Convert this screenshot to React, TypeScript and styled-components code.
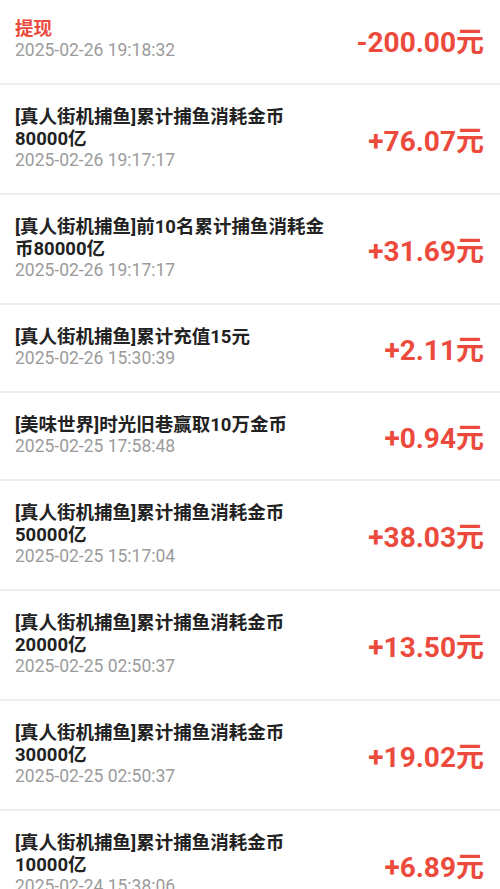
import React from "react";
import styled, { createGlobalStyle } from "styled-components";

const GlobalStyle = createGlobalStyle`
  html, body {
    margin: 0;
    padding: 0;
    background: #ffffff;
  }
  body {
    font-family: Roboto, "Noto Sans CJK SC", "Noto Sans", sans-serif;
    -webkit-font-smoothing: antialiased;
  }
`;

const Page = styled.div`
  width: 500px;
  height: 889px;
  overflow: hidden;
  background: #ffffff;
`;

const List = styled.ul`
  list-style: none;
  margin: 0;
  padding: 0;
`;

const Row = styled.li`
  display: flex;
  align-items: center;
  justify-content: space-between;
  padding: 21px 16px 22px 15px;
  border-bottom: 2px solid #eeeeee;

  &:first-child {
    padding-top: 18px;
  }
`;

const Info = styled.div`
  display: flex;
  flex-direction: column;
  min-width: 0;
`;

const Title = styled.div<{ $red?: boolean }>`
  font-family: Roboto, "Noto Sans CJK SC", sans-serif;
  font-size: 18.5px;
  font-weight: 700;
  line-height: 22px;
  color: ${(p) => (p.$red ? "#ec4a3d" : "#222222")};
  white-space: pre-line;
`;

const Time = styled.div`
  font-family: Roboto, "Noto Sans", sans-serif;
  font-size: 17.5px;
  line-height: 21px;
  color: #9b9b9b;
`;

const Amount = styled.div`
  font-family: Roboto, "Noto Sans CJK SC", sans-serif;
  font-size: 28px;
  font-weight: 700;
  color: #ec4a3d;
  white-space: nowrap;
`;

type Record = {
  title: string;
  time: string;
  amount: string;
  red?: boolean;
};

const records: Record[] = [
  { title: "提现", time: "2025-02-26 19:18:32", amount: "-200.00元", red: true },
  { title: "[真人街机捕鱼]累计捕鱼消耗金币\n80000亿", time: "2025-02-26 19:17:17", amount: "+76.07元" },
  { title: "[真人街机捕鱼]前10名累计捕鱼消耗金\n币80000亿", time: "2025-02-26 19:17:17", amount: "+31.69元" },
  { title: "[真人街机捕鱼]累计充值15元", time: "2025-02-26 15:30:39", amount: "+2.11元" },
  { title: "[美味世界]时光旧巷赢取10万金币", time: "2025-02-25 17:58:48", amount: "+0.94元" },
  { title: "[真人街机捕鱼]累计捕鱼消耗金币\n50000亿", time: "2025-02-25 15:17:04", amount: "+38.03元" },
  { title: "[真人街机捕鱼]累计捕鱼消耗金币\n20000亿", time: "2025-02-25 02:50:37", amount: "+13.50元" },
  { title: "[真人街机捕鱼]累计捕鱼消耗金币\n30000亿", time: "2025-02-25 02:50:37", amount: "+19.02元" },
  { title: "[真人街机捕鱼]累计捕鱼消耗金币\n10000亿", time: "2025-02-24 15:38:06", amount: "+6.89元" },
];

export default function App() {
  return (
    <Page>
      <GlobalStyle />
      <List>
        {records.map((r, i) => (
          <Row key={i}>
            <Info>
              <Title $red={r.red}>{r.title}</Title>
              <Time>{r.time}</Time>
            </Info>
            <Amount>{r.amount}</Amount>
          </Row>
        ))}
      </List>
    </Page>
  );
}
